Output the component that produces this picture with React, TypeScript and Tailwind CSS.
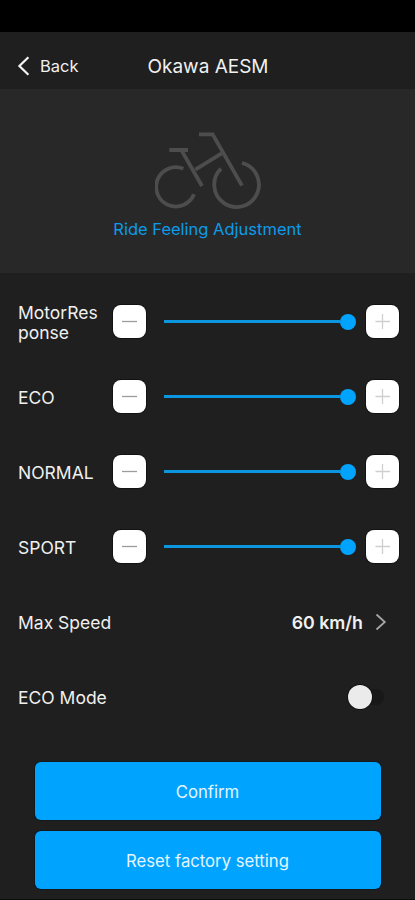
import { ReactNode, useState } from "react";

const levels = [
  { id: "motor", label: "MotorRes ponse" },
  { id: "eco", label: "ECO" },
  { id: "normal", label: "NORMAL" },
  { id: "sport", label: "SPORT" },
];

export default function App() {
  const [ecoMode, setEcoMode] = useState(false);

  return (
    <div className="flex h-[900px] w-[415px] flex-col overflow-hidden border-b border-[#100c0e] bg-[#1f1f1f] font-['Inter','Liberation_Sans',sans-serif] text-[#f0f0f0]">
      <div className="h-8 shrink-0 bg-black" />
      <Header />
      <Hero />
      <div className="flex flex-col pt-[11px]">
        {levels.map((level) => (
          <Row key={level.id}>
            <LevelControl label={level.label} />
          </Row>
        ))}
        <Row>
          <span className="pt-[3px] text-[17.5px]">Max Speed</span>
          <span className="ml-auto pt-[3px] text-[17.8px] font-semibold">
            60 km/h
          </span>
          <svg
            className="mr-[28px] ml-[12px] h-[18px] w-[12px]"
            viewBox="0 0 12 18"
            fill="none"
            stroke="#a6a6a6"
            strokeWidth="1.8"
          >
            <path d="M1.5 1.5 9.8 9 1.5 16.5" />
          </svg>
        </Row>
        <Row>
          <span className="pt-[3px] text-[17.5px]">ECO Mode</span>
          <Toggle isOn={ecoMode} onToggle={() => setEcoMode(!ecoMode)} />
        </Row>
      </div>
      <div className="flex flex-col gap-[11px] px-[34.5px] pt-[28px]">
        <ActionButton>Confirm</ActionButton>
        <ActionButton>Reset factory setting</ActionButton>
      </div>
    </div>
  );
}

function Header() {
  return (
    <div className="grid h-[57px] shrink-0 grid-cols-[1fr_auto_1fr] items-center pt-[10px]">
      <button className="flex items-center pl-[17px]">
        <svg
          className="h-[20px] w-[13px]"
          viewBox="0 0 13 20"
          fill="none"
          stroke="#f4f4f4"
          strokeWidth="2.2"
        >
          <path d="M11.4 1.2 2.4 10l9 8.8" />
        </svg>
        <span className="pt-px pl-[10px] text-[16.5px]">Back</span>
      </button>
      <h1 className="pt-[3px] pl-px text-[19px]">Okawa AESM</h1>
    </div>
  );
}

function Hero() {
  return (
    <div className="flex h-[184px] shrink-0 flex-col items-center bg-[#282828] pt-[43px]">
      <BikeIcon />
      <p className="pt-[8px] text-[16.5px] leading-[24px] text-[#0c9bea]">
        Ride Feeling Adjustment
      </p>
    </div>
  );
}

function BikeIcon() {
  return (
    <svg
      className="h-[77px] w-[106px]"
      viewBox="45 36 318 231"
      fill="none"
      stroke="#4d4d4d"
      strokeWidth="11.5"
    >
      {/* wheels */}
      <path d="M130 146A59 59 0 1 0 162 223" />
      <path d="M243 146A67 67 0 1 0 306 129" />
      {/* saddle and seat tube */}
      <path d="M88 90H144M125 92L186 198" />
      {/* top tube */}
      <path d="M166 149L245 100" />
      {/* handlebar and fork */}
      <path d="M177 43H218L306 197" />
    </svg>
  );
}

function Row({ children }: { children: ReactNode }) {
  return <div className="flex h-[75px] items-center pl-[18px]">{children}</div>;
}

function LevelControl({ label }: { label: string }) {
  return (
    <>
      <span className="w-[95px] shrink-0 pt-[3px] text-[17.5px] leading-[20px]">
        {label}
      </span>
      <StepButton>
        <path d="M9 16.5H24" stroke="#9c9c9c" strokeWidth="1.3" />
      </StepButton>
      <div className="ml-[17.5px] flex w-[192px] items-center">
        <div className="h-[3px] grow bg-[#0d96e0]" />
        <div className="size-[16px] rounded-full bg-[#00a4ff]" />
      </div>
      <div className="ml-[10px]">
        <StepButton>
          <path d="M9.5 16.5H24M16.5 9V24" stroke="#cfcfcf" strokeWidth="1.3" />
        </StepButton>
      </div>
    </>
  );
}

function StepButton({ children }: { children: ReactNode }) {
  return (
    <button className="block size-[33px] shrink-0 rounded-[8px] bg-white ring-1 ring-[#121212]">
      <svg className="size-[33px]" viewBox="0 0 33 33" fill="none">
        {children}
      </svg>
    </button>
  );
}

function Toggle({ isOn, onToggle }: { isOn: boolean; onToggle: () => void }) {
  return (
    <button
      onClick={onToggle}
      className={`mr-[31px] ml-auto flex h-[16px] w-[36px] items-center rounded-full ${isOn ? "justify-end bg-[#00a4ff]" : "bg-[#181818]"}`}
    >
      <span className="size-[24px] shrink-0 rounded-full bg-[#ebebeb] ring-1 ring-[#121212]" />
    </button>
  );
}

function ActionButton({ children }: { children: ReactNode }) {
  return (
    <button className="h-[58px] rounded-[6px] bg-[#00a4ff] pt-[3px] text-[16.7px] text-[#e4f5ff] ring-1 ring-[#121a20]">
      {children}
    </button>
  );
}
